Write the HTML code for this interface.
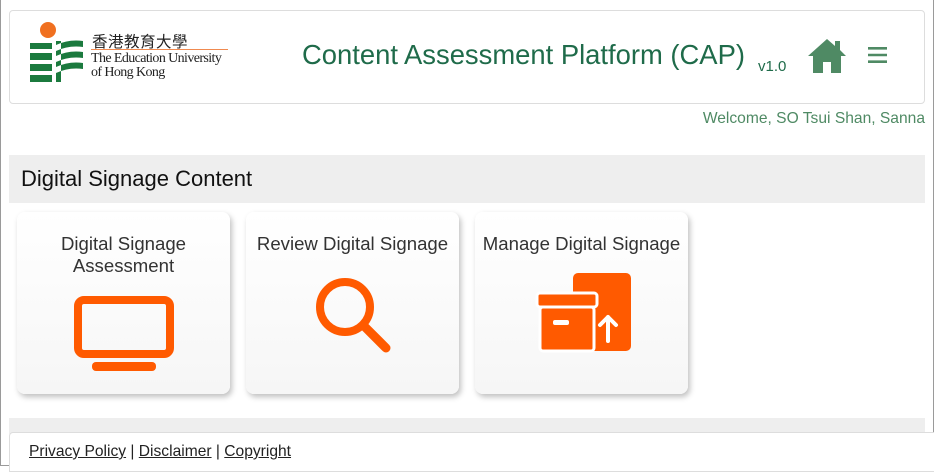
<!DOCTYPE html>
<html><head><meta charset="utf-8"><style>
*{box-sizing:border-box;margin:0;padding:0}
body{width:934px;height:466px;overflow:hidden;background:#fff;font-family:"Liberation Sans","Noto Sans CJK TC",sans-serif;position:relative}
.frame{position:absolute;left:0;top:0;width:934px;height:466px;border:1px solid #9a9a9a;border-top:none}
.hdr{position:absolute;left:9px;top:10px;width:916px;height:94px;border:1px solid #ddd;border-radius:4px}
.title{position:absolute;left:302px;top:39px;font-size:27.4px;color:#1f6b4a}
.ver{position:absolute;left:758px;top:58px;font-size:15px;color:#1f6b4a}
.wel{position:absolute;right:9px;top:110px;font-size:15.6px;color:#4f8a64}
.bar{position:absolute;left:9px;top:155px;width:916px;height:48px;background:#eee}
.bar span{position:absolute;left:12px;top:11px;font-size:22px;color:#111}
.card{position:absolute;top:212px;width:213px;height:182px;border-radius:8px;box-shadow:2px 3px 6px rgba(0,0,0,.25);text-align:center;font-size:18.6px;color:#333;padding-top:21px;line-height:22px;background:linear-gradient(#fff,#f6f6f6);white-space:nowrap}
.card svg{position:absolute}
.bar2{position:absolute;left:9px;top:418px;width:916px;height:16px;background:#eee}
.foot{position:absolute;left:9px;top:432px;width:930px;height:40px;background:#fff;border:1px solid #ddd;border-radius:4px 0 0 0}
.foot div{position:absolute;left:19px;top:10px;font-size:15.6px;color:#222}
.foot a{color:#222;text-decoration:underline}
</style></head><body>
<div class="frame"></div>
<div class="hdr">
<svg style="position:absolute;left:19px;top:10px" width="56" height="62" viewBox="0 0 56 62">
<circle cx="19" cy="9" r="8" fill="#f07020"/>
<path d="M1 22h22v6H1zM1 32h22v7H1zM1 43h22v7H1zM1 54h22v7H1z" fill="#1b7a3e"/>
<path d="M27 24q13-6 27-4v6q-14-2-27 4zM27 35q13-6 27-4v6q-14-2-27 4zM27 46q13-6 27-4v6q-14-2-27 4zM27 20v41h5V20z" fill="#1b7a3e"/>
</svg>
<div style="position:absolute;left:82px;top:19px;font-size:15.5px;color:#222;letter-spacing:.5px">香港教育大學</div>
<div style="position:absolute;left:81px;top:38px;width:137px;height:1px;background:#f08a50"></div>
<div style="position:absolute;left:81px;top:41px;font-family:'Liberation Serif',serif;font-size:14px;color:#222;line-height:14px;letter-spacing:-.6px">The Education University<br>of Hong Kong</div>
</div>
<div class="title">Content Assessment Platform (CAP)</div>
<div class="ver">v1.0</div>
<svg style="position:absolute;left:807px;top:38px" width="40" height="36" viewBox="0 0 40 36"><path d="M20 1L1 18h5v17h10V24h8v11h10V18h5L33 12V3h-5v5z" fill="#4f8a64"/></svg>
<svg style="position:absolute;left:868px;top:46px" width="19" height="18" viewBox="0 0 19 18"><path d="M0 1h19v2.6H0zM0 7.7h19v2.6H0zM0 14.4h19V17H0z" fill="#4f8a64"/></svg>
<div class="wel">Welcome, SO Tsui Shan, Sanna</div>
<div class="bar"><span>Digital Signage Content</span></div>
<div class="card" style="left:17px">Digital Signage<br>Assessment
<svg style="left:57px;top:84px" width="100" height="78" viewBox="0 0 100 78"><rect x="4" y="4" width="92" height="54" rx="6" fill="none" stroke="#ff5a00" stroke-width="8"/><rect x="18" y="66" width="64" height="9" rx="4" fill="#ff5a00"/></svg></div>
<div class="card" style="left:246px">Review Digital Signage
<svg style="left:66px;top:62px" width="82" height="82" viewBox="0 0 82 82"><circle cx="33" cy="33" r="25" fill="none" stroke="#ff5a00" stroke-width="8"/><path d="M51 51l23 23" stroke="#ff5a00" stroke-width="9" stroke-linecap="round"/></svg></div>
<div class="card" style="left:475px">Manage Digital Signage
<svg style="left:58px;top:61px" width="100" height="80" viewBox="0 0 100 80"><rect x="40" y="0" width="58" height="78" rx="5" fill="#ff5a00"/><rect x="4" y="20" width="60" height="14" rx="3" fill="#ff5a00" stroke="#fff" stroke-width="3"/><rect x="7" y="34" width="54" height="44" rx="3" fill="#ff5a00" stroke="#fff" stroke-width="3"/><rect x="20" y="47" width="16" height="5" rx="2" fill="#fff"/><path d="M75 68V44M67 52l8-8 8 8" stroke="#fff" stroke-width="4" fill="none" stroke-linecap="round" stroke-linejoin="round"/></svg></div>
<div class="bar2"></div>
<div class="foot"><div><a>Privacy Policy</a> | <a>Disclaimer</a> | <a>Copyright</a></div></div>
</body></html>
